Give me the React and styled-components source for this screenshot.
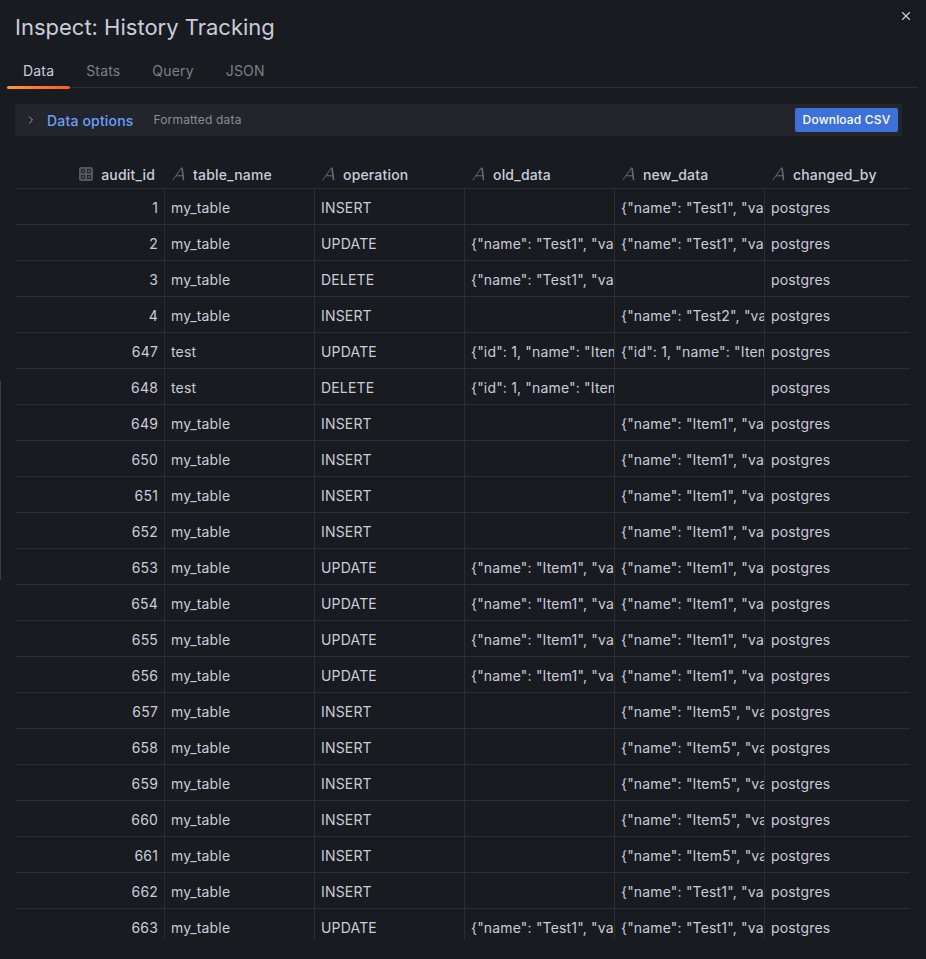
import React from "react";
import styled, { createGlobalStyle } from "styled-components";
import { ChevronRight, X } from "lucide-react";

const GlobalStyle = createGlobalStyle`
  html, body {
    margin: 0;
    padding: 0;
    background: #181b1f;
  }
`;

const insert = (id, table, newData) => ({ id, table, op: "INSERT", oldData: "", newData, by: "postgres" });
const update = (id, table, oldData, newData) => ({ id, table, op: "UPDATE", oldData, newData, by: "postgres" });
const remove = (id, table, oldData) => ({ id, table, op: "DELETE", oldData, newData: "", by: "postgres" });

const json = (name) => `{"name": "${name}", "value": 100}`;
const jsonId = `{"id": 1, "name": "Item1", "value": 100}`;

const rows = [
  insert(1, "my_table", json("Test1")),
  update(2, "my_table", json("Test1"), json("Test1")),
  remove(3, "my_table", json("Test1")),
  insert(4, "my_table", json("Test2")),
  update(647, "test", jsonId, jsonId),
  remove(648, "test", jsonId),
  insert(649, "my_table", json("Item1")),
  insert(650, "my_table", json("Item1")),
  insert(651, "my_table", json("Item1")),
  insert(652, "my_table", json("Item1")),
  update(653, "my_table", json("Item1"), json("Item1")),
  update(654, "my_table", json("Item1"), json("Item1")),
  update(655, "my_table", json("Item1"), json("Item1")),
  update(656, "my_table", json("Item1"), json("Item1")),
  insert(657, "my_table", json("Item5")),
  insert(658, "my_table", json("Item5")),
  insert(659, "my_table", json("Item5")),
  insert(660, "my_table", json("Item5")),
  insert(661, "my_table", json("Item5")),
  insert(662, "my_table", json("Test1")),
  update(663, "my_table", json("Test1"), json("Test1")),
];

const columns = ["table_name", "operation", "old_data", "new_data", "changed_by"];
const tabs = ["Data", "Stats", "Query", "JSON"];

function NumberIcon() {
  return (
    <IconSvg viewBox="0 0 14 14">
      <rect x="0" y="0" width="14" height="14" rx="2" fill="#55575d" />
      <rect x="2" y="2" width="4" height="4" fill="#26282d" />
      <rect x="8" y="2" width="4" height="4" fill="#26282d" />
      <rect x="2" y="8" width="4" height="4" fill="#26282d" />
      <rect x="8" y="8" width="4" height="4" fill="#26282d" />
      <path d="M3 4h2M9 4h2M3 10h2M9 10h2" stroke="#6d6f75" strokeWidth="1" />
    </IconSvg>
  );
}

function StringIcon() {
  return (
    <IconSvg viewBox="0 0 14 14">
      <path d="M0.8 13.2 L9.4 0.8 H10.2" fill="none" stroke="currentColor" strokeWidth="0.9" />
      <path d="M10 0.8 L11.6 13.2" fill="none" stroke="currentColor" strokeWidth="1.5" />
      <path d="M4 8.8 H11" fill="none" stroke="currentColor" strokeWidth="1" />
    </IconSvg>
  );
}

export default function App() {
  return (
    <Drawer>
      <GlobalStyle />
      <ScrollThumb />
      <CloseButton>
        <X size={14} strokeWidth={2} />
      </CloseButton>
      <Title>Inspect: History Tracking</Title>
      <TabBar>
        {tabs.map((tab, i) => (
          <Tab key={tab} $active={i === 0}>
            {tab}
          </Tab>
        ))}
      </TabBar>
      <OptionsBar>
        <ChevronRight size={12} strokeWidth={2} color="#9fa3ab" />
        <OptionsTitle>Data options</OptionsTitle>
        <OptionsHint>Formatted data</OptionsHint>
        <DownloadButton>Download CSV</DownloadButton>
      </OptionsBar>
      <TableWrap>
        <HeaderRow>
          <HeaderCell $right>
            <NumberIcon />
            audit_id
          </HeaderCell>
          {columns.map((col) => (
            <HeaderCell key={col}>
              <StringIcon />
              {col}
            </HeaderCell>
          ))}
        </HeaderRow>
        {rows.map((row) => (
          <Row key={row.id}>
            <Cell $right>{row.id}</Cell>
            <Cell>{row.table}</Cell>
            <Cell>{row.op}</Cell>
            <Cell>{row.oldData}</Cell>
            <Cell>{row.newData}</Cell>
            <Cell>{row.by}</Cell>
          </Row>
        ))}
      </TableWrap>
    </Drawer>
  );
}

const Drawer = styled.div`
  position: relative;
  box-sizing: border-box;
  width: 926px;
  height: 959px;
  overflow: hidden;
  background: #181b1f;
  color: #ccccdc;
  font-family: Inter, "Liberation Sans", sans-serif;
  letter-spacing: 0.01071em;
  padding-top: 13px;
`;

const ScrollThumb = styled.div`
  position: absolute;
  left: 0;
  top: 381px;
  width: 1px;
  height: 199px;
  background: #3a3d43;
`;

const CloseButton = styled.div`
  position: absolute;
  top: 9px;
  right: 13px;
  display: flex;
  color: #ccccdc;
`;

const Title = styled.h1`
  margin: 0 0 0 15px;
  font-size: 22px;
  font-weight: 400;
  line-height: 28px;
  letter-spacing: 0;
  color: #ccccdc;
`;

const TabBar = styled.div`
  display: flex;
  box-sizing: border-box;
  width: 911px;
  height: 47px;
  margin-left: 7px;
  border-bottom: 1px solid #2c2e33;
`;

const Tab = styled.div`
  position: relative;
  box-sizing: border-box;
  height: 47px;
  padding: 22px 16px 0;
  font-size: 14px;
  line-height: 16px;
  color: ${(p) => (p.$active ? "#ccccdc" : "#7e8087")};

  ${(p) =>
    p.$active &&
    `
    &::after {
      content: "";
      position: absolute;
      left: 0;
      right: 0;
      bottom: -1px;
      height: 3px;
      border-radius: 2px;
      background: linear-gradient(90deg, #ff9830, #ff5a28);
    }
  `}
`;

const OptionsBar = styled.div`
  display: flex;
  align-items: center;
  box-sizing: border-box;
  width: 887px;
  height: 32px;
  margin: 16px 0 0 15px;
  padding: 0 4px 0 10px;
  background: #22252b;
`;

const OptionsTitle = styled.span`
  margin-left: 10px;
  font-size: 14px;
  font-weight: 500;
  color: #6e9fff;
`;

const OptionsHint = styled.span`
  margin: -2px 0 0 20px;
  font-size: 12px;
  color: #8b8d94;
`;

const DownloadButton = styled.div`
  margin-left: auto;
  width: 103px;
  height: 24px;
  border-radius: 2px;
  background: #3d71d9;
  color: #fff;
  font-size: 12px;
  font-weight: 500;
  line-height: 24px;
  text-align: center;
`;

const TableWrap = styled.div`
  box-sizing: border-box;
  width: 895px;
  height: 803px;
  margin-left: 15px;
  padding-top: 16px;
  overflow: hidden;
`;

const HeaderRow = styled.div`
  display: grid;
  grid-template-columns: 149px 150px 150px 150px 150px 146px;
  box-sizing: border-box;
  height: 37px;
  padding-top: 8px;
  border-bottom: 1px solid #2c2e33;
`;

const HeaderCell = styled.div`
  display: flex;
  align-items: center;
  justify-content: ${(p) => (p.$right ? "flex-end" : "flex-start")};
  gap: ${(p) => (p.$right ? "8px" : "7px")};
  box-sizing: border-box;
  padding: 0 ${(p) => (p.$right ? "9px" : "6px")} 0 8px;
  font-size: 14px;
  font-weight: 500;
  color: #ccccdc;
  white-space: nowrap;
`;

const IconSvg = styled.svg`
  width: 14px;
  height: 14px;
  flex: none;
  color: #6d6f75;
`;

const Row = styled.div`
  display: grid;
  grid-template-columns: 149px 150px 150px 150px 150px 146px;
  box-sizing: border-box;
  height: 36px;
  border-bottom: 1px solid #2c2e33;
`;

const Cell = styled.div`
  box-sizing: border-box;
  padding: 1px ${(p) => (p.$right ? "6px" : "0")} 0 6px;
  font-size: 14px;
  line-height: 35px;
  color: #ccccdc;
  white-space: nowrap;
  overflow: hidden;
  text-align: ${(p) => (p.$right ? "right" : "left")};
  border-left: ${(p) => (p.$right ? "none" : "1px solid #2c2e33")};
`;
